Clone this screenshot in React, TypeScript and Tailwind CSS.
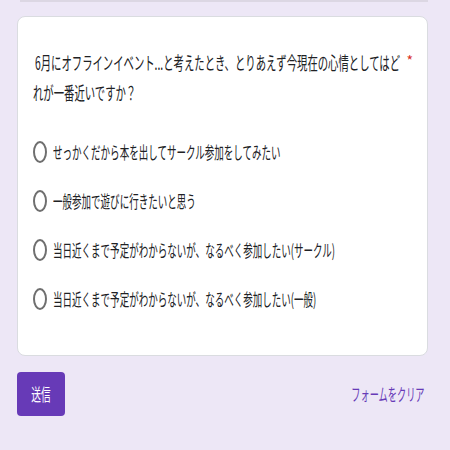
import React from 'react';

const options = [
  'せっかくだから本を出してサークル参加をしてみたい',
  '一般参加で遊びに行きたいと思う',
  '当日近くまで予定がわからないが、なるべく参加したい(サークル)',
  '当日近くまで予定がわからないが、なるべく参加したい(一般)',
];

const font = { fontFamily: '"Noto Sans CJK JP", "Noto Sans", sans-serif' };

export default function App() {
  return (
    <div className="w-[450px] h-[450px] overflow-hidden bg-[#ede7f6]" style={font}>
      {/* bottom edge of the previous card */}
      <div className="ml-[20px] w-[408px] h-[2px] bg-[#dcd7e3]" />

      {/* question card */}
      <div className="mt-[14px] ml-[17px] w-[411px] bg-white border border-[#dadce0] rounded-lg pt-[30px] pb-[32px] pl-[15px] pr-[14px]">
        <div className="flex items-center h-[30px] pl-[2px]">
          <div className="flex-1 min-w-0 overflow-visible">
            <span className="inline-block origin-left scale-x-[0.575] whitespace-nowrap text-[18px] text-[#202124]">
              6月にオフラインイベント...と考えたとき、とりあえず今現在の心情としてはど
            </span>
          </div>
          <span className="text-[#d93025] text-[14px] leading-none -mt-[4px] ml-[2px]">*</span>
        </div>
        <div className="flex items-center h-[30px]">
          <span className="inline-block origin-left scale-x-[0.575] whitespace-nowrap text-[18px] text-[#202124]">
            れが一番近いですか？
          </span>
        </div>

        <div className="mt-[20px] flex flex-col">
          {options.map((opt) => (
            <div key={opt} className="flex items-center gap-[6px] h-[49px]">
              <div className="w-[14px] h-[22px] shrink-0 rounded-[50%] border-2 border-[#6f6f6f]" />
              <span className="inline-block origin-left scale-x-[0.56] whitespace-nowrap text-[17px] text-[#202124]">
                {opt}
              </span>
            </div>
          ))}
        </div>
      </div>

      {/* actions */}
      <div className="mt-[16px] ml-[17px] w-[411px] flex items-center justify-between">
        <button className="w-[48px] h-[44px] rounded bg-[#673ab7] text-white flex items-center justify-center overflow-hidden">
          <span className="inline-block scale-x-[0.57] whitespace-nowrap text-[17px]">送信</span>
        </button>
        <div className="flex justify-end w-[140px] pr-[4px]">
          <span className="inline-block origin-right scale-x-[0.54] whitespace-nowrap text-[17px] text-[#673ab7]">
            フォームをクリア
          </span>
        </div>
      </div>
    </div>
  );
}
